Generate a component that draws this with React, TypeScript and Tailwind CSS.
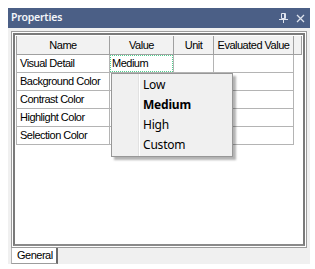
const rows = [
  "Visual Detail",
  "Background Color",
  "Contrast Color",
  "Highlight Color",
  "Selection Color",
];

const menuItems = ["Low", "Medium", "High", "Custom"];

function PinIcon() {
  return (
    <svg width="9" height="10" viewBox="0 0 9 10" fill="none" stroke="#dfe4ee" strokeWidth="1">
      <path d="M2.5 0.5h4v5h-4z" />
      <path d="M5.5 0.5v5" />
      <path d="M0 6.5h9" />
      <path d="M4.5 6.5v3.5" />
    </svg>
  );
}

function CloseIcon() {
  return (
    <svg width="9" height="9" viewBox="0 0 9 9" fill="none" stroke="#dfe4ee" strokeWidth="1.3">
      <path d="M1 1l7 7M8 1l-7 7" />
    </svg>
  );
}

export default function App() {
  const cell = "h-[18px] border-r border-b border-[#b4b4b4] px-[3px] flex items-center whitespace-nowrap overflow-hidden";
  const head = "h-[19px] border-r border-b border-[#a0a0a0] bg-[#f2f2f2] flex items-center justify-center whitespace-nowrap";

  return (
    <div className="relative w-[315px] h-[269px] bg-white pt-[8px] pl-[8px] font-['Liberation_Sans',Arial,sans-serif] text-[11px] tracking-[-0.5px] text-black">
      <div className="w-[302px] h-[256px] flex flex-col bg-[#f0f0f0]">
        {/* title bar */}
        <div className="h-[20px] bg-[#4b5f86] flex items-center justify-between pl-[3px] pr-[5px]">
          <span className="text-[#f4f6fa] font-['Noto_Sans',sans-serif] font-semibold text-[10.5px] tracking-[-0.2px]">Properties</span>
          <div className="flex items-center gap-[8px]">
            <PinIcon />
            <CloseIcon />
          </div>
        </div>

        <div className="flex flex-col px-[3px] pt-[3px]">
          {/* tab page */}
          <div className="h-[217px] border border-[#9c9c9c] bg-white p-[1px]">
            <div className="h-full border-2 border-[#7a7a7a] border-b-[#8a8a8a] bg-white p-[1px]">
              <div className="grid grid-cols-[94px_64px_40px_80px_1fr]">
                <div className={`${head} border-l`}>Name</div>
                <div className={head}>Value</div>
                <div className={head}>Unit</div>
                <div className={head}>Evaluated Value</div>
                <div className={head}></div>
                {rows.map((r, i) => (
                  <div key={r} className="contents">
                    <div className={`${cell} border-l`}>{r}</div>
                    {i === 0 ? (
                      <div className="h-[18px] border-r border-b border-[#b4b4b4] flex">
                        <div className="flex-1 border border-dotted border-[#4fd28f] flex items-center px-[1px]">
                          Medium
                        </div>
                      </div>
                    ) : (
                      <div className={cell}></div>
                    )}
                    <div className={cell}></div>
                    <div className={cell}></div>
                    <div className="h-[18px]"></div>
                  </div>
                ))}
              </div>
            </div>
          </div>

          {/* tabs */}
          <div className="flex h-[16px]">
            <div className="w-[47px] h-[16px] bg-white border-l border-[#b5b5b5] border-r-2 border-r-[#6b6b6b] border-b border-b-[#9c9c9c] flex items-center pl-[5px]">
              General
            </div>
          </div>
        </div>
      </div>

      {/* dropdown menu */}
      <div className="absolute left-[111px] top-[73px] w-[122px] h-[84px] bg-[#f0f0f0] border border-[#979797] shadow-[3px_3px_2px_rgba(0,0,0,0.3)] flex font-['Noto_Sans',sans-serif] text-[12px] tracking-[-0.2px] text-black">
        <div className="w-[27px] border-r border-[#e2e2e2] shadow-[1px_0_0_#ffffff]"></div>
        <div className="flex flex-col pt-[1px] pl-[4px]">
          {menuItems.map((m) => (
            <div key={m} className={`h-[20px] flex items-center ${m === "Medium" ? "font-bold" : "font-normal"}`}>
              {m}
            </div>
          ))}
        </div>
      </div>
    </div>
  );
}
